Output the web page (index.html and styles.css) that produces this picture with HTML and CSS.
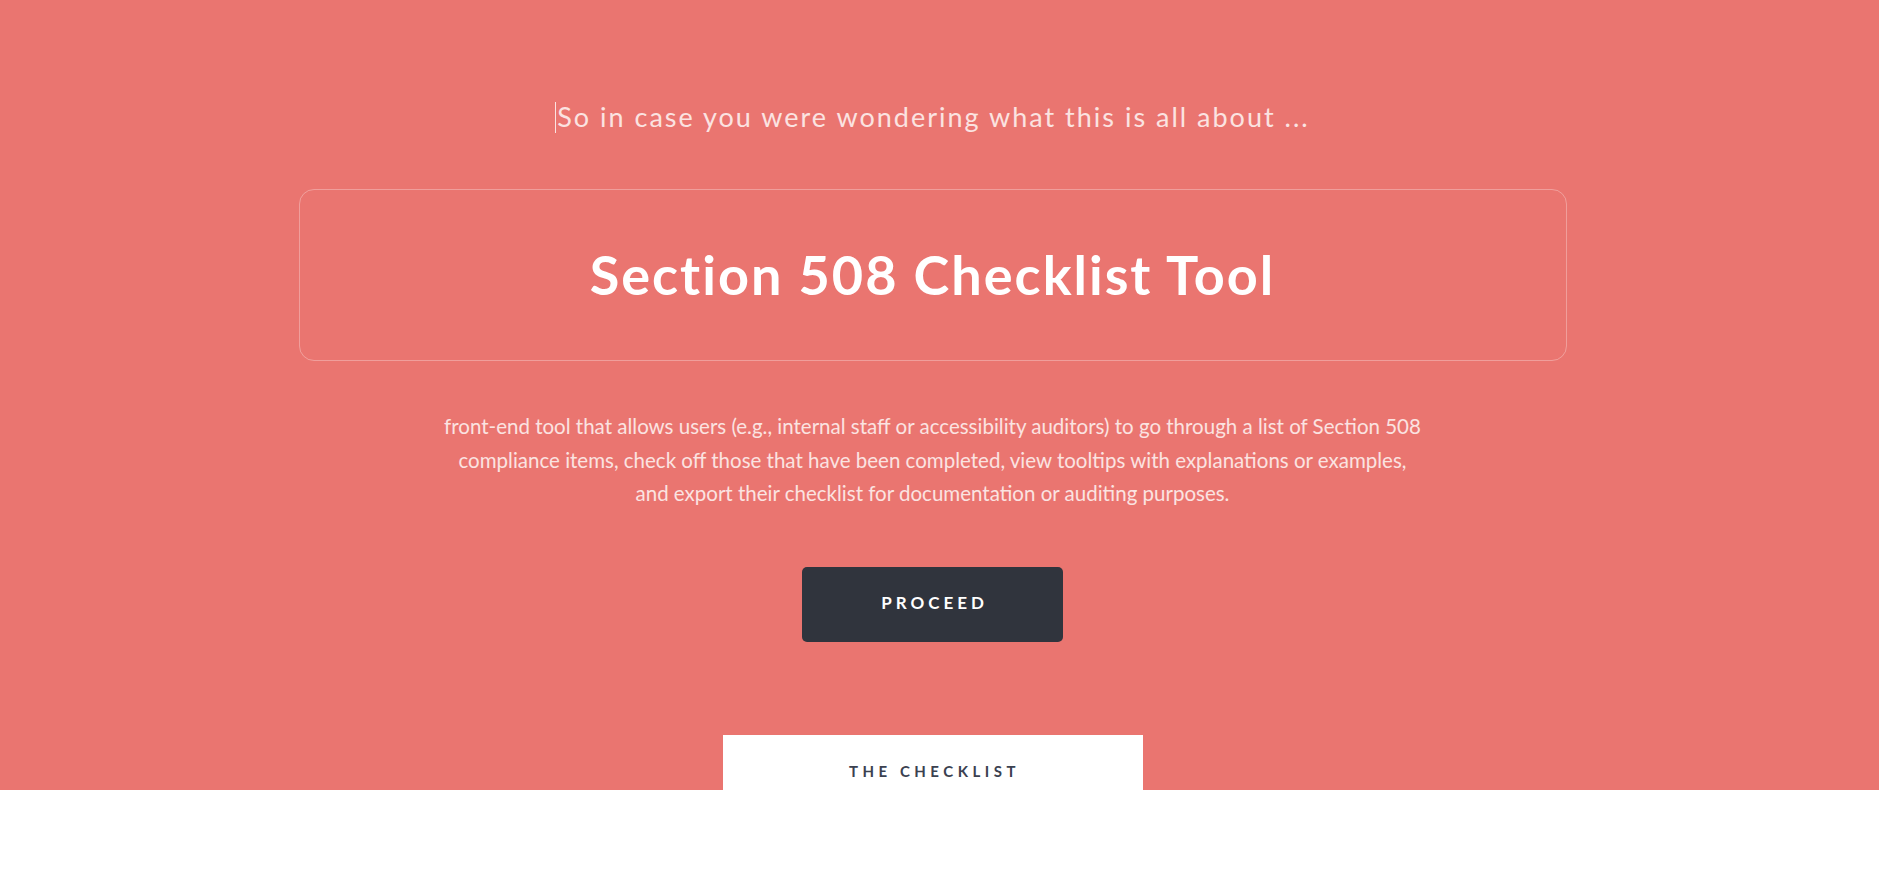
FILE: index.html
```html
<!DOCTYPE html>
<html lang="en">
<head>
<meta charset="utf-8">
<title>Section 508 Checklist Tool</title>
<link rel="stylesheet" href="styles.css">
</head>
<body>
<header class="hero">
  <div class="hero-inner">
    <p class="intro"><span class="cursor"></span>So in case you were wondering what this is all about ...</p>
    <div class="title-box">
      <h1 class="title">Section 508 Checklist Tool</h1>
    </div>
    <p class="desc">front-end tool that allows users (e.g., internal staff or accessibility auditors) to go through a list of Section 508<br>compliance items, check off those that have been completed, view tooltips with explanations or examples,<br>and export their checklist for documentation or auditing purposes.</p>
    <a class="btn" href="#">PROCEED</a>
    <div class="tab">THE CHECKLIST</div>
  </div>
</header>
<main class="content"></main>
</body>
</html>
```
FILE: styles.css
```css
html, body {
  margin: 0;
  padding: 0;
  background: #ffffff;
  font-family: Lato, "Open Sans", sans-serif;
}

.hero {
  background: #ea7570;
}

.hero-inner {
  width: 1865px;
  display: flex;
  flex-direction: column;
  align-items: center;
  padding-top: 99px;
}

.intro {
  margin: 0;
  font-size: 27px;
  line-height: 36px;
  letter-spacing: 2px;
  color: #fbe3e1;
  display: flex;
  align-items: center;
}

.cursor {
  display: inline-block;
  width: 1px;
  height: 31px;
  background: #fbe3e1;
  margin-right: 1px;
}

.title-box {
  margin-top: 54px;
  width: 1268px;
  height: 172px;
  box-sizing: border-box;
  border: 1px solid rgba(255, 255, 255, 0.3);
  border-radius: 15px;
  display: flex;
  align-items: center;
  justify-content: center;
}

.title {
  margin: 0;
  font-size: 54px;
  font-weight: 700;
  letter-spacing: 2px;
  color: #ffffff;
  line-height: 60px;
}

.desc {
  margin: 49px 0 0;
  font-size: 20.5px;
  line-height: 33.5px;
  text-align: center;
  color: #fbe3e1;
}

.btn {
  margin-top: 56px;
  width: 261px;
  height: 75px;
  border-radius: 5px;
  background: #30343d;
  color: #ffffff;
  text-decoration: none;
  font-size: 17px;
  font-weight: 700;
  letter-spacing: 4px;
  display: flex;
  align-items: center;
  justify-content: center;
  padding-left: 4px;
  padding-bottom: 3px;
  box-sizing: border-box;
}

.tab {
  margin-top: 93px;
  width: 420px;
  height: 55px;
  box-sizing: border-box;
  padding-top: 27px;
  background: #ffffff;
  color: #3b4150;
  font-size: 15px;
  line-height: 18px;
  font-weight: 700;
  letter-spacing: 4.5px;
  text-align: center;
  padding-left: 4px;
}

.content {
  height: 80px;
}
```
